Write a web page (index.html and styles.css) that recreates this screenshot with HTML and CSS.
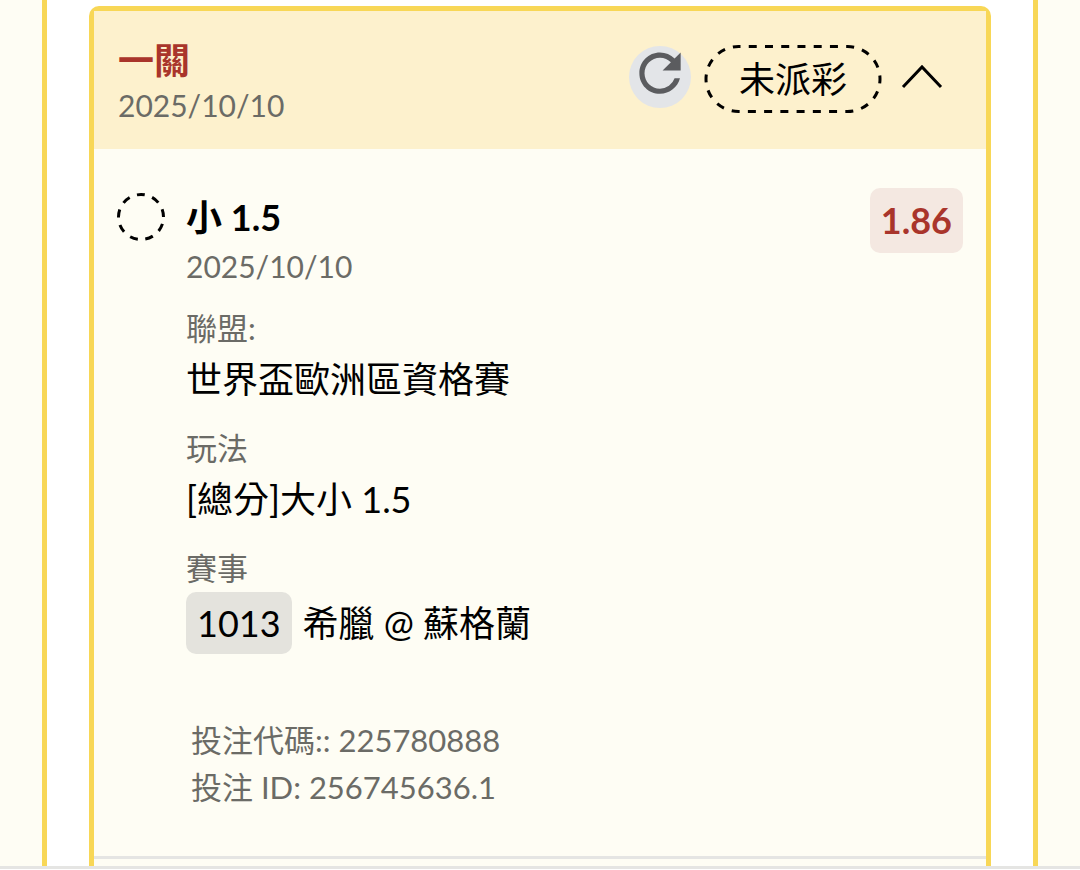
FILE: index.html
```
<!DOCTYPE html>
<html lang="zh-Hant">
  <head>
    <meta charset="UTF-8" />
    <meta name="viewport" content="width=device-width, initial-scale=1.0" />
    <title>投注紀錄</title>
    <link rel="stylesheet" href="styles.css">
  </head>
  <body>
    <main class="page">
      <div class="panel">
        <article class="card">
          <header class="card-header">
            <div class="heading">
              <h1 class="title">一關</h1>
              <p class="date">2025/10/10</p>
            </div>

            <div class="actions">
              <button class="refresh" type="button" aria-label="重新整理">
                <svg viewBox="0 1.5 24 24" aria-hidden="true">
                  <path
                    d="M17.65 6.35A7.958 7.958 0 0 0 12 4c-4.42 0-7.99 3.58-7.99 8s3.57 8 7.99 8c3.73 0 6.84-2.55 7.73-6h-2.08A5.99 5.99 0 0 1 12 18c-3.31 0-6-2.69-6-6s2.69-6 6-6c1.66 0 3.14.69 4.22 1.78L13 11h7V4l-2.35 2.35z"
                  />
                </svg>
              </button>
              <div class="status">
                <svg class="status-outline" viewBox="0 0 178 68" aria-hidden="true">
                  <rect x="2" y="1.5" width="174" height="65" rx="32.5" />
                </svg>
                <span>未派彩</span>
              </div>
              <button class="toggle" type="button" aria-label="收合" aria-expanded="true">
                <svg viewBox="0 0 42 26" aria-hidden="true">
                  <path d="M2 23 21 3l19 20" />
                </svg>
              </button>
            </div>
          </header>

          <section class="bet">
            <svg class="marker" viewBox="0 0 48 48" aria-hidden="true">
              <circle cx="24" cy="24" r="22.5" />
            </svg>

            <div class="details">
              <div class="pick-row">
                <div>
                  <h2 class="pick">小 1.5</h2>
                  <p class="date">2025/10/10</p>
                </div>
                <span class="odds">1.86</span>
              </div>

              <dl class="fields">
                <div>
                  <dt>聯盟:</dt>
                  <dd>世界盃歐洲區資格賽</dd>
                </div>
                <div>
                  <dt>玩法</dt>
                  <dd>[總分]大小 1.5</dd>
                </div>
                <div>
                  <dt>賽事</dt>
                  <dd class="match"><span class="code">1013</span>希臘 @ 蘇格蘭</dd>
                </div>
              </dl>

              <div class="reference">
                <p>投注代碼:: 225780888</p>
                <p>投注 ID: 256745636.1</p>
              </div>
            </div>
          </section>
        </article>
      </div>
    </main>
  </body>
</html>
```
FILE: styles.css
```
/*
  Global styles
*/

:root {
  --yellow: #f8d756;
  --header-bg: #fdf1cd;
  --cream: #fefdf4;
  --red: #a9352b;
  --grey: #6b6b66;
  --line: #e5e5e3;
}
* {
  margin: 0;
  padding: 0;
  box-sizing: border-box;
}
body {
  min-height: 100vh;
  display: flex;
  flex-direction: column;
  padding-bottom: 1px;
  background-color: white;
  color: black;
  font-family: Lato, "Noto Sans CJK TC", sans-serif;
  font-size: 36px;
}
button {
  border: none;
  background: none;
  cursor: pointer;
}
svg {
  display: block;
}

/*
  Page frame
*/

.page {
  flex: 1;
  display: flex;
  padding: 0 42px;
  border-bottom: 3px solid var(--line);
  background-color: var(--cream);
}
.panel {
  flex: 1;
  display: flex;
  padding: 6px 42px 0;
  border: solid var(--yellow);
  border-width: 0 5px;
  background-color: white;
}
.card {
  flex: 1;
  border: 5px solid var(--yellow);
  border-bottom: none;
  border-radius: 10px 10px 0 0;
  background-color: var(--cream);
}
.date {
  color: var(--grey);
  font-size: 30px;
  line-height: 40px;
}

/*
  Card header
*/

.card-header {
  display: flex;
  justify-content: space-between;
  padding: 24px 43px 24px 24px;
  background-color: var(--header-bg);
}
.title {
  color: var(--red);
  font-size: 36px;
  line-height: 50px;
}
.actions {
  display: flex;
  align-items: center;
  align-self: flex-start;
  padding-top: 10px;
}
.refresh {
  width: 62px;
  height: 62px;
  margin-bottom: 4px;
  border-radius: 50%;
  background-color: #e3e5e8;
}
.refresh svg {
  width: 62px;
  fill: #5b5c5f;
}
.status {
  position: relative;
  width: 178px;
  margin: 0 19px 0 13px;
  line-height: 68px;
  text-align: center;
}
.status-outline {
  position: absolute;
  inset: 0;
  fill: none;
  stroke: black;
  stroke-width: 3;
  stroke-dasharray: 8 8.24;
  stroke-dashoffset: 6;
}
.toggle {
  margin-bottom: 4px;
}
.toggle svg {
  width: 42px;
  fill: none;
  stroke: black;
  stroke-width: 3;
}

/*
  Bet details
*/

.bet {
  display: flex;
  gap: 21px;
  padding: 39px 23px 45px;
  border-bottom: 3px solid var(--line);
}
.marker {
  flex: none;
  width: 48px;
  height: 48px;
  margin-top: 5px;
  fill: none;
  stroke: black;
  stroke-width: 3;
  stroke-dasharray: 8 7.7;
  stroke-dashoffset: 8.7;
}
.details {
  flex: 1;
}
.pick-row {
  display: flex;
  justify-content: space-between;
  align-items: flex-start;
}
.pick {
  font-size: 36px;
  line-height: 58px;
}
.odds {
  padding: 0 11px;
  border-radius: 10px;
  background-color: #f4e8e1;
  color: var(--red);
  font-weight: bold;
  line-height: 65px;
}
.fields {
  display: grid;
  gap: 18px;
  margin-top: 18px;
}
.fields dt {
  color: var(--grey);
  font-size: 31px;
  line-height: 48px;
}
.fields dd {
  line-height: 54px;
}
.fields .match {
  display: flex;
  align-items: center;
  gap: 11px;
  line-height: 62px;
}
.code {
  padding: 0 11px;
  border-radius: 10px;
  background-color: #e4e3dd;
}
.reference {
  margin: 63px 0 0 5px;
  color: var(--grey);
  font-size: 31px;
  line-height: 47px;
}
```
